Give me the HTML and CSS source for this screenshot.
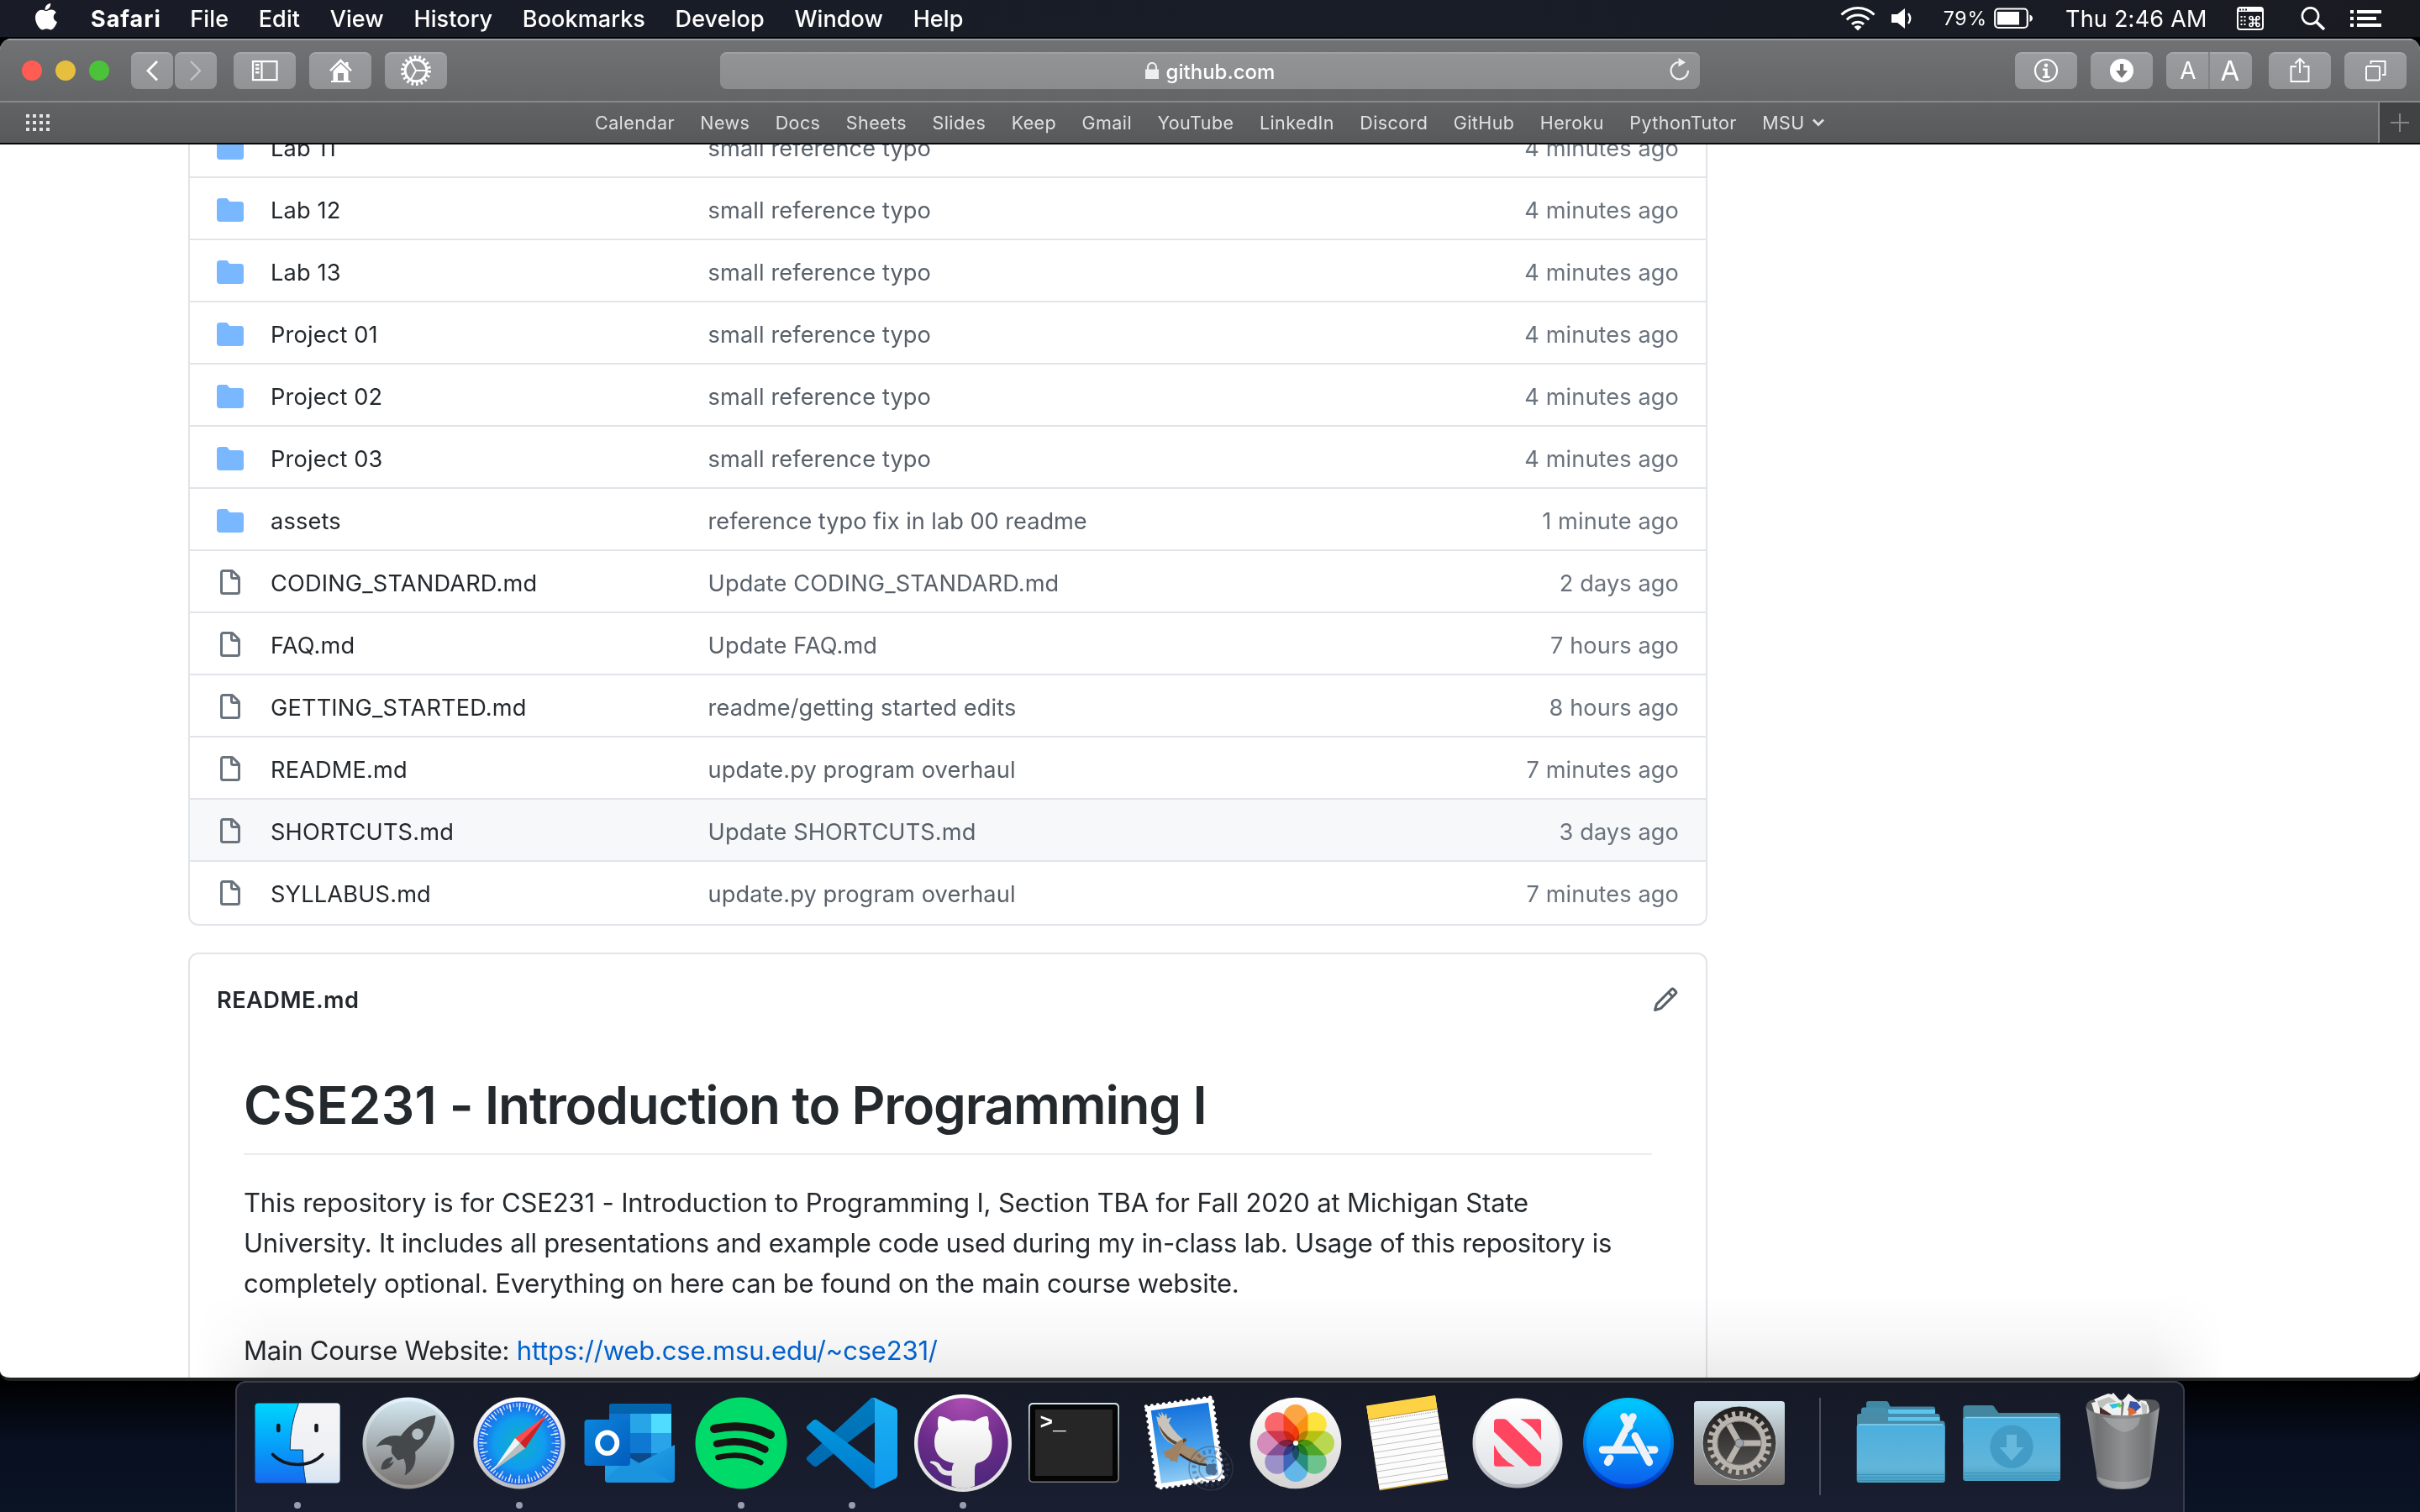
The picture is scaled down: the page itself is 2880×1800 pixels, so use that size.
FILE: index.html
```html
<!DOCTYPE html>
<html lang="en">
<head>
<meta charset="utf-8">
<title>CSE231</title>
<link rel="stylesheet" href="styles.css">
</head>
<body>
<svg class="defs" width="0" height="0" aria-hidden="true">
  <defs>
    <symbol id="folder" viewBox="0 0 16 16"><path fill="#79b8ff" d="M1.75 1A1.75 1.75 0 000 2.75v10.5C0 14.216.784 15 1.75 15h12.5A1.75 1.75 0 0016 13.25v-8.5A1.75 1.75 0 0014.25 3h-6.5a.25.25 0 01-.2-.1l-.9-1.2c-.33-.44-.85-.7-1.4-.7h-3.5z"/></symbol>
    <symbol id="file" viewBox="0 0 16 16"><path fill="#6a737d" fill-rule="evenodd" d="M3.75 1.5a.25.25 0 00-.25.25v11.5c0 .138.112.25.25.25h8.5a.25.25 0 00.25-.25V6H9.75A1.75 1.75 0 018 4.25V1.5H3.75zm5.75.56v2.19c0 .138.112.25.25.25h2.19L9.5 2.06zM2 1.75C2 .784 2.784 0 3.75 0h5.086c.464 0 .909.184 1.237.513l3.414 3.414c.329.328.513.773.513 1.237v8.086A1.75 1.75 0 0112.25 15h-8.5A1.75 1.75 0 012 13.25V1.75z"/></symbol>
  </defs>
</svg>

<header class="menubar">
  <svg class="apple" width="26" height="32" viewBox="0 0 26 32"><path fill="#fff" d="M18.2 0c.3 2.100-.5 4.100-1.700 5.600-1.200 1.500-3.100 2.600-4.900 2.400-.3-2 .6-4.100 1.700-5.400C14.500 1.100 16.600.1 18.200 0zM24.900 10.900c-1.500.9-3.200 2.500-3.200 5.300 0 3.300 2.500 5 4.300 5.700-.6 2-1.600 4.100-2.900 5.900-1.300 1.800-2.600 3.600-4.700 3.600s-2.600-1.200-5-1.200c-2.300 0-3.100 1.200-5 1.200s-3.300-1.700-4.700-3.600C1.600 25.100 0 21 0 17.100c0-6.100 4-9.400 8-9.400 2.100 0 3.900 1.400 5.200 1.400s3.300-1.500 5.800-1.500c2.200 0 4.500 1.200 5.900 3.300z"/></svg>
  <nav class="menus">
    <b class="app">Safari</b><span>File</span><span>Edit</span><span>View</span><span>History</span><span>Bookmarks</span><span>Develop</span><span>Window</span><span>Help</span>
  </nav>
  <div class="status">
    <svg class="wifi" width="42" height="30" viewBox="0 0 42 30" fill="none" stroke="#fff" stroke-width="3"><path d="M1.500 10.500a27.500 27.500 0 0 1 39 0M7.800 16.500a18.700 18.700 0 0 1 26.400 0M14 22a10 10 0 0 1 14 0"/><path fill="#fff" stroke="none" d="M16.500 25a6.500 6.500 0 0 1 9 0L21 29.600z"/></svg>
    <svg class="vol" width="26" height="26" viewBox="0 0 26 26"><path fill="#fff" d="M0 8h7L16 1v24L7 18H0z"/><path fill="none" stroke="#fff" stroke-width="2.400" d="M20 7q4.500 6 0 12"/></svg>
    <span class="pct">79%</span>
    <svg class="batt" width="46" height="26" viewBox="0 0 46 26"><rect x="1.200" y="1.500" width="38.600" height="22.500" rx="4" fill="none" stroke="#fff" stroke-width="2.200"/><rect x="4" y="5" width="26" height="15.500" fill="#fff"/><path fill="#fff" d="M42.500 8.500q3.500 1.500 3.500 4.300t-3.500 4.300z"/></svg>
    <span class="clock">Thu 2:46 AM</span>
    <svg class="kbd" width="32" height="28" viewBox="0 0 32 28"><rect x="1" y="1" width="30" height="26" rx="3" fill="none" stroke="#fff" stroke-width="2"/><path fill="#fff" d="M1 1h30v5H1z"/><path fill="#171c27" d="M3 2.500h2v2H3zM6.500 2.500h2v2h-2zM10 2.500h2v2h-2z"/><path fill="#fff" d="M4.500 11h2v2h-2zM8.500 11h2v2h-2zM4.500 15.500h2v2h-2zM8.500 15.500h2v2h-2zM4.500 20h2v2h-2zM8.500 20h2v2h-2z"/><g fill="none" stroke="#fff" stroke-width="1.600"><path d="M19 13v9M23 13v9M16.500 15.500h9M16.500 19.500h9"/><circle cx="17" cy="13.500" r="2"/><circle cx="25" cy="13.500" r="2"/><circle cx="17" cy="21.500" r="2"/><circle cx="25" cy="21.500" r="2"/></g></svg>
    <svg class="spot" width="30" height="28" viewBox="0 0 30 28" fill="none" stroke="#fff"><circle cx="11.500" cy="11" r="9.600" stroke-width="2.600"/><path stroke-width="3.600" d="M18.500 18l9.500 9"/></svg>
    <svg class="list" width="38" height="20" viewBox="0 0 38 20"><path fill="#fff" d="M0 0h4v4H0zM8 0h29v4H8zM0 8h4v4H0zM8 8h23v4H8zM0 16h4v4H0zM8 16h29v4H8z"/></svg>
  </div>
</header>

<main class="window">
  <div class="toolbar">
    <div class="lights"><i class="r"></i><i class="y"></i><i class="g"></i></div>
    <div class="pair">
      <svg class="btn" width="50" height="44" viewBox="0 0 50 44" fill="none" stroke="#fff" stroke-width="2.800"><path d="M31 11L20 22.200 31 33.500"/></svg>
      <svg class="btn" width="50" height="44" viewBox="0 0 50 44" fill="none" stroke="#c2c3c4" stroke-width="2.400"><path d="M19 11l11 11.200L19 33.500"/></svg>
    </div>
    <svg class="btn side" width="74" height="44" viewBox="0 0 74 44"><path fill="none" stroke="#fff" stroke-width="2.200" d="M23 11.200h28.500v22H23zM33.500 11v22"/><path fill="#fff" d="M26 14h4.500v2.400H26zM26 18.500h4.500v2.400H26zM26 23h4.500v2.400H26z"/></svg>
    <svg class="btn home" width="74" height="44" viewBox="0 0 74 44"><path fill="#fff" d="M37.500 8L24 21.500l1.800 1.500L37.500 12l11.700 11 1.800-1.500-4.500-4.500v-5H43v2z"/><path fill="#fff" fill-rule="evenodd" d="M37.500 14l9 8.500V34H49v2H26v-2h2.500V22.500zM34 25v9h7v-9z"/></svg>
    <svg class="btn gear" width="74" height="44" viewBox="0 0 74 44" fill="none" stroke="#fff"><circle cx="37" cy="22" r="16" stroke-width="4" stroke-dasharray="2.600 2.985"/><circle cx="37" cy="22" r="12.800" stroke-width="3"/><path stroke-width="2" d="M37 22h12M37 22L31 11.500M37 22l-6 10.500"/></svg>
    <div class="url">
      <span></span>
      <span class="host"><svg width="16" height="20" viewBox="0 0 16 20"><path fill="#eee" d="M0 8.500h16V20H0z"/><path fill="none" stroke="#eee" stroke-width="2.200" d="M3 9V6a5 5 0 0 1 10 0v3"/></svg><span>github.com</span></span>
      <svg class="reload" width="24" height="28" viewBox="0 0 24 28"><path fill="none" stroke="#f2f2f2" stroke-width="2.200" d="M10.500 6A10.200 10.200 0 1 0 22 16"/><path fill="#f2f2f2" d="M10.500 1v10.500L19 6.200z"/></svg>
    </div>
    <div class="tools">
      <svg class="btn" width="74" height="44" viewBox="0 0 74 44"><circle cx="37" cy="22" r="13" fill="none" stroke="#fff" stroke-width="2.200"/><circle cx="37" cy="15.800" r="2.200" fill="#fff"/><path fill="#fff" d="M33 19.500h5.800v9h2.700V31H33v-2.500h2.600V22H33z"/></svg>
      <svg class="btn" width="74" height="44" viewBox="0 0 74 44"><circle cx="37" cy="22" r="14" fill="#fff"/><path fill="#77787a" d="M35 14h4.200v8H44l-7 9-7-9h5z"/></svg>
      <div class="btn aa"><span>A</span><span class="big">A</span></div>
      <svg class="btn share" width="74" height="44" viewBox="0 0 74 44" fill="none" stroke="#fff" stroke-width="2"><path d="M33 17.200h-6.500V35h21V17.200H41M37 25V8M31.500 13.500L37 8l5.500 5.500"/></svg>
      <svg class="btn" width="74" height="44" viewBox="0 0 74 44" fill="none" stroke="#fff" stroke-width="2"><rect x="26" y="17" width="16" height="16.500" rx="1.500"/><path d="M31.500 14v-3h17v16H45"/></svg>
    </div>
  </div>
  <div class="bookmarks">
    <svg width="30" height="20" viewBox="0 0 30 20"><path fill="#e4e4e4" d="M0 0h4v4H0zM8 0h4v4H8zM16 0h4v4h-4zM24 0h4v4h-4zM0 8h4v4H0zM8 8h4v4H8zM16 8h4v4h-4zM24 8h4v4h-4zM0 16h4v4H0zM8 16h4v4H8zM16 16h4v4h-4zM24 16h4v4h-4z"/></svg>
    <nav class="links">
      <span>Calendar</span><span>News</span><span>Docs</span><span>Sheets</span><span>Slides</span><span>Keep</span><span>Gmail</span><span>YouTube</span><span>LinkedIn</span><span>Discord</span><span>GitHub</span><span>Heroku</span><span>PythonTutor</span><span class="drop">MSU<svg width="14" height="10" viewBox="0 0 14 10"><path fill="none" stroke="#e0e0e0" stroke-width="2.800" d="M1 1.500l6 6 6-6"/></svg></span>
    </nav>
    <div class="newtab"><svg width="22" height="22" viewBox="0 0 22 22"><path stroke="#858687" stroke-width="2" d="M0 11h22M11 0v22"/></svg></div>
  </div>

  <div class="page">
    <section class="files">
      <div class="row"><svg><use href="#folder"/></svg><span class="name">Lab 11</span><span class="msg">small reference typo</span><span class="age">4 minutes ago</span></div>
      <div class="row"><svg><use href="#folder"/></svg><span class="name">Lab 12</span><span class="msg">small reference typo</span><span class="age">4 minutes ago</span></div>
      <div class="row"><svg><use href="#folder"/></svg><span class="name">Lab 13</span><span class="msg">small reference typo</span><span class="age">4 minutes ago</span></div>
      <div class="row"><svg><use href="#folder"/></svg><span class="name">Project 01</span><span class="msg">small reference typo</span><span class="age">4 minutes ago</span></div>
      <div class="row"><svg><use href="#folder"/></svg><span class="name">Project 02</span><span class="msg">small reference typo</span><span class="age">4 minutes ago</span></div>
      <div class="row"><svg><use href="#folder"/></svg><span class="name">Project 03</span><span class="msg">small reference typo</span><span class="age">4 minutes ago</span></div>
      <div class="row"><svg><use href="#folder"/></svg><span class="name">assets</span><span class="msg long">reference typo fix in lab 00 readme</span><span class="age">1 minute ago</span></div>
      <div class="row"><svg><use href="#file"/></svg><span class="name">CODING_STANDARD.md</span><span class="msg">Update CODING_STANDARD.md</span><span class="age">2 days ago</span></div>
      <div class="row"><svg><use href="#file"/></svg><span class="name">FAQ.md</span><span class="msg">Update FAQ.md</span><span class="age">7 hours ago</span></div>
      <div class="row"><svg><use href="#file"/></svg><span class="name">GETTING_STARTED.md</span><span class="msg">readme/getting started edits</span><span class="age">8 hours ago</span></div>
      <div class="row"><svg><use href="#file"/></svg><span class="name">README.md</span><span class="msg">update.py program overhaul</span><span class="age">7 minutes ago</span></div>
      <div class="row hover"><svg><use href="#file"/></svg><span class="name">SHORTCUTS.md</span><span class="msg">Update SHORTCUTS.md</span><span class="age">3 days ago</span></div>
      <div class="row"><svg><use href="#file"/></svg><span class="name">SYLLABUS.md</span><span class="msg">update.py program overhaul</span><span class="age">7 minutes ago</span></div>
    </section>
    <section class="readme">
      <div class="readme-head"><b>README.md</b><svg width="32" height="32" viewBox="0 0 16 16"><path fill="#586069" fill-rule="evenodd" d="M11.013 1.427a1.750 1.750 0 012.474 0l1.086 1.086a1.750 1.750 0 010 2.474l-8.610 8.610c-.21.21-.47.364-.756.445l-3.251.93a.75.75 0 01-.927-.928l.929-3.250a1.750 1.750 0 01.445-.758l8.610-8.610zm1.414 1.060a.25.25 0 00-.354 0L10.811 3.750l1.439 1.440 1.263-1.263a.25.25 0 000-.354l-1.086-1.086zM11.189 6.250L9.750 4.810l-6.286 6.287a.25.25 0 00-.064.108l-.558 1.953 1.953-.558a.249.249 0 00.108-.064l6.286-6.286z"/></svg></div>
      <article>
        <h1><span class="code">CSE231</span> - Introduction to Programming I</h1>
        <p><span class="first">This repository is for CSE231 - Introduction to Programming I, Section TBA for Fall 2020 at Michigan State</span><br>University. It includes all presentations and example code used during my in-class lab. Usage of this repository is<br>completely optional. Everything on here can be found on the main course website.</p>
        <p>Main Course Website: <a>https://web.cse.msu.edu/~cse231/</a></p>
      </article>
    </section>
  </div>
</main>

<footer class="dock">
  <!-- Finder -->
  <div class="item on"><svg viewBox="-66 -66 132 132"><defs><linearGradient id="f1" x2="0" y2="1"><stop stop-color="#00d5fd"/><stop offset=".5" stop-color="#05a3fa"/><stop offset="1" stop-color="#176cf0"/></linearGradient><linearGradient id="f2" x2="0" y2="1"><stop stop-color="#f5f5f7"/><stop offset=".6" stop-color="#eff0f4"/><stop offset="1" stop-color="#d7e5f3"/></linearGradient></defs>
    <rect x="-50.500" y="-47.500" width="101" height="95" rx="4" fill="url(#f1)"/><path fill="url(#f2)" d="M1.500-47.500H46.500a4 4 0 0 1 4 4V43.500a4 4 0 0 1-4 4H10Q6.500 30 6.500 8H-8.800Q-9-22 1.500-47.500z"/><path fill="none" stroke="#113a63" d="M1.500-47.500Q-9-22-8.800 8H6.500Q6.500 30 10 47.500"/><path fill="none" stroke="#14181e" stroke-width="4.600" stroke-linecap="round" d="M-22.700-21v6M22.500-21v6"/><path fill="none" stroke="#14181e" stroke-width="3.600" stroke-linecap="round" d="M-29.500 13.500C-14 29.500 15 29.500 29.800 13.500"/></svg></div>
  <!-- Launchpad -->
  <div class="item"><svg viewBox="-66 -66 132 132"><defs><linearGradient id="l1" x2="0" y2="1"><stop stop-color="#d2e6ef"/><stop offset=".5" stop-color="#a6aeb2"/><stop offset="1" stop-color="#787573"/></linearGradient><linearGradient id="l2" x2="0" y2="1"><stop stop-color="#e6f6fd"/><stop offset="1" stop-color="#94928f"/></linearGradient></defs>
    <circle r="54.500" fill="url(#l2)"/><circle r="50" fill="url(#l1)"/><path fill="#44484b" d="M32.500-33Q6-30-9-8.500-28-12-38.500 4.500q12-5 19-.5Q-21 8-19.500 12.500L-12.500 20.500l7-2Q-1 28-4.400 38.500 11 30 8 10.500 30-7 32.500-33z"/><circle cx="11" cy="-10.700" r="6.700" fill="#b3bfc4"/><path fill="#44484b" d="M-18.500 16.500Q-32 18-32.500 31.500-21 32-17 21.500q-3 2-6.500 3 4.500-4 5-8z"/></svg></div>
  <!-- Safari -->
  <div class="item on"><svg viewBox="-66 -66 132 132"><defs><radialGradient id="s1"><stop stop-color="#10b0c4"/><stop offset=".6" stop-color="#109df0"/><stop offset="1" stop-color="#1d5fe4"/></radialGradient><linearGradient id="s2" x2="0" y2="1"><stop stop-color="#fff"/><stop offset="1" stop-color="#b9babd"/></linearGradient></defs>
    <circle r="54.500" fill="url(#s2)"/><circle r="49.500" fill="url(#s1)"/><circle r="45.500" fill="none" stroke="#dcecfa" stroke-width="5" stroke-dasharray="1.200 2.771"/><circle r="43" fill="none" stroke="#dcecfa" stroke-width="9" stroke-dasharray="1.400 9.858" stroke-dashoffset=".7"/><path fill="#ff4b4b" d="M33.600-34-5-6l6 6z"/><path fill="#d21f24" d="M33.600-34 7 6.300 1 0z"/><path fill="#f3f3f3" d="M-31.600 33-5-6l6 6z"/><path fill="#bdbdbd" d="M-31.600 33 7 6.300 1 0z"/></svg></div>
  <!-- Outlook -->
  <div class="item"><svg viewBox="-66 -66 132 132"><defs><linearGradient id="o1" x2="1" y2="1"><stop stop-color="#0b86dd"/><stop offset="1" stop-color="#035cbd"/></linearGradient><linearGradient id="o2" x2="1" y2="1"><stop stop-color="#29abec"/><stop offset="1" stop-color="#1286d8"/></linearGradient></defs>
    <path fill="#0364ae" d="M-22-47H47a2 2 0 0 1 2 2v12H-25v-11a3 3 0 0 1 3-3z"/><path fill="#0c74cf" d="M-25-35H0v24h-25z"/><path fill="#28a5e8" d="M0-35h25v24H0z"/><path fill="#50dcff" d="M25-35h24v24H25z"/><path fill="#0a5fb4" d="M-25-12H0v50h-25z"/><path fill="#0f78d2" d="M0-12h25v24H0z"/><path fill="#2aa4e8" d="M25-12h24v24H25z"/><path fill="#0c4a8c" d="M0 12h25v12H0z"/><path fill="#1272c4" d="M25 12h24v12H25z"/><path fill="url(#o2)" d="M53 2v41a4 4 0 0 1-4 4H-26a4 4 0 0 1-4-4V2l40 22z"/><path fill="#1a94df" d="M0 17.500L50 46.800q-1 .2-2 .2H-26a4 4 0 0 1-4-4z"/><rect x="-54.500" y="-28" width="54.500" height="55" rx="4" fill="url(#o1)"/><ellipse cx="-27.300" cy="-.3" rx="11.600" ry="12.400" fill="none" stroke="#fff" stroke-width="5.800"/></svg></div>
  <!-- Spotify -->
  <div class="item on"><svg viewBox="-66 -66 132 132" fill="none" stroke="#191414" stroke-linecap="round"><circle r="54.500" fill="#00da69" stroke="none"/><path stroke-width="10" d="M-32-17Q6-25 35-10"/><path stroke-width="8.400" d="M-29 .8Q3-6.500 28.500 7.500"/><path stroke-width="6.600" d="M-27.500 17Q2 10 23.300 23"/></svg></div>
  <!-- VS Code -->
  <div class="item on"><svg viewBox="-66 -66 132 132"><defs><linearGradient id="v1" x2="0" y2="1"><stop stop-color="#007dc0"/><stop offset="1" stop-color="#0069b0"/></linearGradient><linearGradient id="v2" x2="0" y2="1"><stop stop-color="#0298dd"/><stop offset="1" stop-color="#0077cc"/></linearGradient><linearGradient id="v3" x2="0" y2="1"><stop stop-color="#1bb1f3"/><stop offset="1" stop-color="#0f98ec"/></linearGradient></defs>
    <path fill="url(#v1)" d="M22-53q2-1.500 5-1v29L-41 27q-3 2-6-.5l-6-5.500q-2.500-2.700 0-5z"/><path fill="url(#v2)" d="M-41-27q-3-2-6 .5l-6 5.500q-2.500 2.700 0 5L22 53q2 1.500 5 1V24.500z"/><path fill="url(#v3)" d="M27-25V24.500 54L51 42.500q3-1.500 3-5v-75q0-3.500-3-5L27-54q-3-.5-5 1 5-2 5 3z"/></svg></div>
  <!-- GitHub Desktop -->
  <div class="item on"><svg viewBox="-66 -66 132 132"><defs><radialGradient id="g1" cx=".5" cy="0" r="1"><stop stop-color="#ad4fb3"/><stop offset=".6" stop-color="#6d2c8a"/><stop offset="1" stop-color="#4a277a"/></radialGradient><linearGradient id="g2" x2="0" y2="1"><stop stop-color="#fff"/><stop offset="1" stop-color="#dcdcdc"/></linearGradient></defs>
    <circle r="58" fill="url(#g2)"/><circle r="53.700" fill="url(#g1)"/><path fill="url(#g2)" d="M-29.300-30.500q.5-2 2.500-1.500Q-20-31-13-26 0-29 14-26q6-5 13.500-6 2-.5 2.200 1.500 2 7 .8 13.500Q34.700-11 34.700-1.300 35 20 17 23.700 14 25 14 32V51Q0 57-13.500 51V38.500Q-26 40-30 31q-2-5-9-7.500-1-1.500 1-2 8-.5 11 4.500 4 8.500 14 6.500-.5-6 2.500-8.500Q-34 20-34-1.300-34-11-29.300-17q-1.500-6 0-13.500z"/></svg></div>
  <!-- Terminal -->
  <div class="item"><svg viewBox="-66 -66 132 132"><defs><linearGradient id="t1" x2="0" y2="1"><stop stop-color="#cfe6ee"/><stop offset="1" stop-color="#777"/></linearGradient></defs><rect x="-54" y="-48" width="108" height="95" rx="5" fill="url(#t1)"/><rect x="-52.300" y="-46" width="104.600" height="91.500" rx="4" fill="#050505"/><path fill="#262626" d="M-46-40H46V39H-46z"/><text x="-40.500" y="-17" class="prompt">&gt;_</text></svg></div>
  <!-- Mail -->
  <div class="item"><svg viewBox="-66 -66 132 132"><defs><linearGradient id="m1" x2="0" y2="1"><stop stop-color="#1673dc"/><stop offset=".6" stop-color="#4ba3ec"/><stop offset="1" stop-color="#8fcbf3"/></linearGradient></defs>
    <g transform="rotate(-8)"><path fill="#fff" stroke="#fff" stroke-width="4.400" stroke-linecap="round" stroke-dasharray="0 7" d="M-39.500-49.500H39.500V48.500H-39.500z"/><path fill="url(#m1)" d="M-34.500-44H34.500V43.500H-34.500z"/></g>
    <path fill="#c9c4bb" d="M-34-32l5 2-3-7 5 5-1-6 4 6 2-4 1 7 5-2-3 7Q-10-10-1-4L-8 4Q-27-2-31-20z"/><path fill="#5d4937" d="M-31-22Q-26-4-9 3L-7 0Q-22-6-31-22z"/><path fill="#a08262" d="M-10 0Q-2-7 1-4L0 3Q-6 10-8 17l-1 6-4-2-3 1-3-4-4-1-1-4-3-3Q-16 8-10 0z"/><path fill="#5a4231" d="M-2-5q4-2 4 2l-4 3z"/><path fill="#a38b70" d="M-3 3Q12 4 17 11l11 9-5 1 3 4-8 0Q2 21-7 12z"/><path fill="none" stroke="#3b3029" stroke-width="2.500" d="M-6 13Q6 22 18 25l8 1"/>
    <g fill="none" stroke="#3c4c66" opacity=".45"><circle cx="31" cy="30" r="26" stroke-width="1.500"/><circle cx="31" cy="30" r="14" stroke-width="1.500"/><circle cx="31" cy="30" r="20" stroke-width="5" stroke-dasharray="3 4"/></g><path fill="#304a6c" opacity=".7" d="M32 23q0-3 3-4 0 3-3 4zm-7 6q1-5 6-4 5-2 7 1-3 4 1 7-2 6-5 5-3-1-5 0-5-2-4-9z"/></svg></div>
  <!-- Photos -->
  <div class="item"><svg viewBox="-66 -66 132 132"><defs><linearGradient id="p1" x2="0" y2="1"><stop stop-color="#fff"/><stop offset="1" stop-color="#d4d3d1"/></linearGradient></defs><circle r="54.300" fill="url(#p1)"/>
    <g class="petals"><rect x="-14.500" y="-46" width="29" height="46" rx="14.500" fill="#fba545"/><rect x="-14.500" y="-46" width="29" height="46" rx="14.500" fill="#fce43c" transform="rotate(45)"/><rect x="-14.500" y="-46" width="29" height="46" rx="14.500" fill="#b9d84f" transform="rotate(90)"/><rect x="-14.500" y="-46" width="29" height="46" rx="14.500" fill="#6cc48c" transform="rotate(135)"/><rect x="-14.500" y="-46" width="29" height="46" rx="14.500" fill="#63b6e8" transform="rotate(180)"/><rect x="-14.500" y="-46" width="29" height="46" rx="14.500" fill="#9c90cb" transform="rotate(225)"/><rect x="-14.500" y="-46" width="29" height="46" rx="14.500" fill="#d48dbb" transform="rotate(270)"/><rect x="-14.500" y="-46" width="29" height="46" rx="14.500" fill="#f9676c" transform="rotate(315)"/></g><circle r="3" fill="#fff"/></svg></div>
  <!-- Notes -->
  <div class="item"><svg viewBox="-66 -66 132 132"><g transform="translate(.8 -.8) rotate(-8.800)"><path fill="#c9a227" d="M-41.300-49H41.300V51.500H-41.300z"/><path fill="#fcfcfc" d="M-41.300-50H41.300V50H-41.300z"/><path fill="#fdd245" d="M-41.300-50.500H41.300V-34H-41.300z"/><path stroke="#b5942f" d="M-41.300-34H41.300"/><path stroke="#999" stroke-width="1.200" stroke-dasharray="1.200 1.500" d="M-41-31H41"/><path stroke="#c3c3c3" d="M-41-25H41M-41-17.300H41M-41-9.600H41M-41-1.900H41M-41 5.800H41M-41 13.500H41M-41 21.200H41M-41 28.900H41M-41 36.600H41M-41 44.300H41"/></g></svg></div>
  <!-- News -->
  <div class="item"><svg viewBox="-66 -66 132 132"><defs><linearGradient id="n1" x2="0" y2="1"><stop stop-color="#fff"/><stop offset="1" stop-color="#dce0e5"/></linearGradient><linearGradient id="n2" x2="0" y2="1"><stop stop-color="#fff"/><stop offset="1" stop-color="#adb1b8"/></linearGradient></defs><circle r="53.500" fill="url(#n2)"/><circle r="50" cy="-1" fill="url(#n1)"/><path fill="#ff4560" d="M-24-28.700h8q2 0 3.500 1.500L28 12.500V24q0 3.500-3.500 3.500H16q-2 0-3.500-1.500L-28-13.500V-25q0-3.700 4-3.700zM3-28.700H25q3 0 3 3V-3.500Q20-20 3-28.700zM-28 2Q-20 19-3 27.700H-25q-3 0-3-3z"/></svg></div>
  <!-- App Store -->
  <div class="item"><svg viewBox="-66 -66 132 132"><defs><linearGradient id="a1" x2="0" y2="1"><stop stop-color="#00c8fd"/><stop offset=".5" stop-color="#0595f8"/><stop offset="1" stop-color="#0c60ec"/></linearGradient><linearGradient id="a2" x2="0" y2="1"><stop stop-color="#00c4fa"/><stop offset="1" stop-color="#0033c8"/></linearGradient></defs><circle r="54" fill="url(#a2)"/><circle r="50" cy="-1" fill="url(#a1)"/><g fill="none" stroke="#eef1f6" stroke-width="9" stroke-linecap="round"><path d="M-30.700 8H31"/><path d="M5.300-31.300L-14 5M-22 18l-2.700 4.700"/><path stroke="#0790f6" stroke-width="12" stroke-linecap="butt" d="M4-15L12-.5 19.500 13"/><path d="M-5.300-31.300L1-20M8-8.500L24.700 22.700"/></g></svg></div>
  <!-- System Preferences -->
  <div class="item"><svg viewBox="-66 -66 132 132"><defs><linearGradient id="y1" x2="0" y2="1"><stop stop-color="#d3e6ee"/><stop offset=".5" stop-color="#a5a9ab"/><stop offset="1" stop-color="#767370"/></linearGradient><linearGradient id="y2" x2="0" y2="1"><stop stop-color="#1e1d1c"/><stop offset="1" stop-color="#5c5b59"/></linearGradient></defs><rect x="-54" y="-50" width="108" height="100" rx="4" fill="url(#y1)"/><circle r="44" fill="url(#y2)" stroke="#cfdfe8" stroke-width=".8"/><g fill="none" stroke="#b9b3ad"><circle r="34" stroke-width="8" stroke-dasharray="4 4.901"/><circle r="29" stroke-width="6.500"/><path stroke-width="7" d="M0 0H27M0 0L-13.500-24M0 0L-13.500 24"/></g><circle r="26" fill="none" stroke="#6f6c69"/><circle r="5" fill="#9da5aa" stroke="#666"/></svg></div>
  <div class="sep"></div>
  <!-- Stacked folders -->
  <div class="item"><svg viewBox="-66 -66 132 132"><defs><linearGradient id="d1" x2="0" y2="1"><stop stop-color="#4aafde"/><stop offset=".75" stop-color="#62b5d9"/><stop offset="1" stop-color="#45a0c4"/></linearGradient></defs><path fill="#3f87a3" d="M-38-50H-17q2 0 3 3l1.500 3.500H38q3 0 3 3V0H-41V-47q0-3 3-3z"/><path fill="#5cc4ee" d="M-15-40H41v6H-15z"/><path fill="#458fac" d="M-44-42.500H-19q2 0 3 3l2 4.500H43q3.500 0 3.500 3V0H-47V-39q0-3.500 3-3.500z"/><path fill="#5cc4ee" d="M-15-31H46.500v6H-15z"/><path fill="#4a8ca8" d="M-49-35H-21q2 0 3 3l3 5.500H49q3.500 0 3.500 3V0H-52V-32q0-3 3-3z"/><rect x="-52.300" y="-22.500" width="105" height="69.500" rx="3" fill="url(#d1)"/><path stroke="#85d0ee" stroke-width="1.300" d="M-50-22H50"/><path stroke="#3b90b3" d="M-52 37.500H52.500M-52 41H52.500M-52 44.500H52.500"/></svg></div>
  <!-- Downloads -->
  <div class="item"><svg viewBox="-66 -66 132 132"><path fill="#43869f" d="M-54-45H-24q3 0 4 3l4.500 6H54q4 0 4 4V0H-57.700V-41q0-4 3.700-4z"/><rect x="-57.700" y="-31" width="115.700" height="76" rx="3" fill="url(#d1)"/><path stroke="#85d0ee" stroke-width="1.300" d="M-55-30.500H55"/><path stroke="#3b90b3" d="M-57.500 35.500H58M-57.500 39H58M-57.500 42.500H58"/><circle cy="4.300" r="25.700" fill="#429cc6"/><path fill="#66b9dd" d="M-6-10H6V5H14.500L0 21-14.500 5H-6z"/></svg></div>
  <!-- Trash -->
  <div class="item"><svg viewBox="-66 -66 132 132"><defs><linearGradient id="x1"><stop stop-color="#8d8f91"/><stop offset=".15" stop-color="#6f7173"/><stop offset=".5" stop-color="#8e9091"/><stop offset=".85" stop-color="#727476"/><stop offset="1" stop-color="#a0a2a3"/></linearGradient></defs><path fill="#55585a" d="M-43.500-43Q-43-52-30-52H32Q44-52 44-43q0 10-44 10t-43.500-10z"/><path fill="#f0f0ee" d="M-37-48l5-1-2-3 9-4 8-3 4 1 2-2 7 8 3 2 5-5 3-4 5 4 7 6 3-2 6 1 3 6 1 6-3 6-12 5H-25l-7-4z"/><path fill="#bfc0c0" d="M-30-50l14-5 9 6-12 2-8 8zM22-49l7 4 0 9-5 4z"/><path fill="#2cc0e8" d="M-16-46l14-2-4 5-6 2z"/><path fill="#5fd23c" d="M-8-46h8l-3 4z"/><path fill="#3a55a8" d="M9-50l8 1 5 6-7 6-9-2z"/><path fill="#d86a3a" d="M7-43l6 2 4 5-10 4z"/><path fill="#4b2c2c" d="M-27-43l14 9-2 2-12-3z"/><path fill="#2b2c30" opacity=".6" d="M-1-51l3 3-2 15h-2z"/><path fill="url(#x1)" d="M-43.500-43Q-38-33 0-33T44-43L34 36Q33 55 0 55T-31 36z"/><path fill="#b5b7b8" opacity=".5" d="M-24-31Q0-27 21-31 20-16 2-13-12-16-24-31z"/><path fill="#d0d0d0" opacity=".35" d="M-30 40Q0 52 33 40 30 54 1 54-26 54-30 40z"/></svg></div>
</footer>
</body>
</html>
```
FILE: styles.css
```css
* { box-sizing: border-box; }

body {
  margin: 0;
  width: 2880px;
  height: 1800px;
  overflow: hidden;
  position: relative;
  display: flex;
  flex-direction: column;
  font-family: Inter, "Liberation Sans", sans-serif;
  background: linear-gradient(#000 1640px, #020408 1660px, #080f20 1715px, #0a1424 1800px);
}

svg { display: block; flex: none; }
.defs { position: absolute; }

/* System menu bar */
.menubar {
  height: 46px;
  flex: none;
  display: flex;
  background: linear-gradient(90deg, #191c26, #181d28 60%, #191b21);
  border-bottom: 2px solid #01040b;
  color: #fff;
  font-size: 27px;
  line-height: 45px;
  font-weight: 500;
}
.apple { margin: 4px 40px 0 42px; }
.menus { display: flex; gap: 35.600px; letter-spacing: .1px; }
.menus .app { font-weight: 700; letter-spacing: 1px; margin-right: -1px; }
.status {
  margin-left: auto;
  padding-right: 45px;
  display: flex;
  align-items: center;
  height: 44px;
}
.vol { margin-left: 19px; }
.pct { font-size: 23px; letter-spacing: .9px; margin-left: 36px; font-weight: 400; }
.batt { margin-left: 8px; }
.clock { margin-left: 39px; font-weight: 400; letter-spacing: .24px; width: 168px; white-space: nowrap; }
.kbd { margin-left: 36px; }
.spot { margin-left: 44px; }
.list { margin-left: 29px; }

/* Browser window */
.window {
  height: 1598px;
  flex: none;
  border-radius: 14px 14px 12px 12px;
  overflow: hidden;
  display: flex;
  flex-direction: column;
  background: #fff;
  border-bottom: 4px solid #212324;
}
.toolbar {
  height: 76px;
  flex: none;
  display: flex;
  align-items: flex-start;
  padding: 14px 16px 0 26px;
  background: linear-gradient(#717274, #646567);
  border-top: 2px solid #9a9c9c;
  border-bottom: 2px solid #87898a;
}
.lights { display: flex; gap: 16px; padding-top: 10px; }
.lights i { width: 24px; height: 24px; border-radius: 50%; }
.lights .r { background: #ff5c54; }
.lights .y { background: #e6bf3f; }
.lights .g { background: #4cc23b; }
.btn {
  border-radius: 8px;
  background: linear-gradient(#9b9c9f, #929395);
  box-shadow: inset 0 2px 0 rgba(255, 255, 255, .12);
}
.pair { display: flex; gap: 2px; margin-left: 26px; }
.side { margin-left: 20px; }
.home, .gear { margin-left: 16px; }
.url {
  width: 1166px;
  height: 44px;
  margin-left: 325px;
  padding-right: 12px;
  border-radius: 8px;
  display: grid;
  grid-template-columns: 1fr auto 1fr;
  align-items: center;
  background: linear-gradient(#939495, #8b8c8d);
  box-shadow: inset 0 2px 0 rgba(255, 255, 255, .12);
  color: #fff;
  font-size: 24px;
  font-weight: 500;
}
.host { display: flex; align-items: center; gap: 9px; margin-left: 12px; }
.host span { padding-top: 2px; }
.reload { justify-self: end; margin-top: -4px; }
.tools { display: flex; gap: 16px; margin-left: auto; }
.aa { display: flex; width: 102px; height: 44px; color: #fff; }
.aa span { flex: 1; text-align: center; font-size: 28px; line-height: 45px; padding-left: 2px; }
.aa .big { border-left: 2px solid #828385; font-size: 33px; padding: 0 2px 0 0; }
.share { margin-left: 4px; }

.bookmarks {
  height: 50px;
  flex: none;
  display: flex;
  align-items: center;
  background: linear-gradient(#626365, #58595b);
  border-bottom: 2px solid #070707;
  padding-left: 31px;
  color: #e0e0e0;
  font-size: 21.500px;
}
.links { display: flex; gap: 30.400px; margin-left: 647px; letter-spacing: .42px; }
.drop { display: flex; align-items: center; gap: 9px; }
.newtab {
  margin-left: auto;
  width: 50px;
  height: 48px;
  display: flex;
  align-items: center;
  justify-content: center;
  background: #414243;
  border-left: 2px solid #87898a;
}

/* Page content */
.page { flex: 1; min-height: 0; overflow: hidden; padding-left: 224px; }
.files, .readme { width: 1808px; border: 2px solid #e1e4e8; border-radius: 12px; }
.files { margin-top: -38px; letter-spacing: .1px; }
.row {
  display: grid;
  grid-template-columns: 32px 520px 1fr auto;
  column-gap: 0;
  height: 74px;
  padding: 18px 32px 0;
  border-top: 2px solid #e1e4e8;
  font-size: 27.200px;
  line-height: 42px;
  color: #586069;
}
.row:last-child { height: 76px; }
.row svg { width: 32px; height: 32px; margin-top: 4px; }
.row.hover { background: #f6f8fa; }
.name { color: #24292e; padding-left: 32px; letter-spacing: .16px; }
.msg { padding-left: 32.600px; }
.msg.long { letter-spacing: -.02px; }
.age { color: #6a737d; }

.readme { margin-top: 32px; height: 700px; color: #24292e; }
.readme-head {
  height: 108px;
  padding: 0 32px;
  display: flex;
  align-items: center;
  justify-content: space-between;
  font-size: 27.200px;
}
.readme-head b { font-weight: 600; letter-spacing: .46px; }
article { padding: 32px 64px 0; font-size: 31px; line-height: 48px; letter-spacing: -.24px; white-space: nowrap; }
h1 {
  margin: 0;
  font-size: 62px;
  line-height: 80px;
  font-weight: 600;
  letter-spacing: -1.140px;
  padding-bottom: 17px;
  border-bottom: 2px solid #eaecef;
}
h1 .code { letter-spacing: .4px; }
.first { letter-spacing: -.15px; }
p { margin: 33px 0 0; }
p + p { margin-top: 32px; }
a { color: #0366d6; letter-spacing: -.19px; }

/* Dock, floating over the window and the desktop */
.dock {
  position: absolute;
  left: 280px;
  top: 1644px;
  width: 2320px;
  height: 170px;
  padding: 6px 0 0 6px;
  display: flex;
  background: linear-gradient(#161a27, #191e31);
  border: 2px solid #3a3c49;
  border-radius: 12px;
}
/* soft shade cast upward onto the window */
.dock::before {
  content: "";
  position: absolute;
  left: -50px;
  right: -50px;
  top: -106px;
  height: 100px;
  background: linear-gradient(rgba(0, 0, 0, 0), rgba(0, 0, 0, .03) 55%, rgba(0, 0, 0, .08));
  -webkit-mask-image: linear-gradient(90deg, transparent, #000 90px, #000 calc(100% - 90px), transparent);
  mask-image: linear-gradient(90deg, transparent, #000 90px, #000 calc(100% - 90px), transparent);
}
.item { width: 132px; }
.item svg { width: 132px; height: 132px; }
.on::after {
  content: "";
  display: block;
  width: 8px;
  height: 8px;
  border-radius: 50%;
  background: #9a9db1;
  margin: 4px auto 0;
}
.sep { width: 2px; height: 116px; margin: 12px 29px 0; background: #4c4f5d; }
.petals { isolation: isolate; }
.petals rect { mix-blend-mode: multiply; }
.prompt { font: 700 26px "Liberation Mono", monospace; fill: #fff; }
```
